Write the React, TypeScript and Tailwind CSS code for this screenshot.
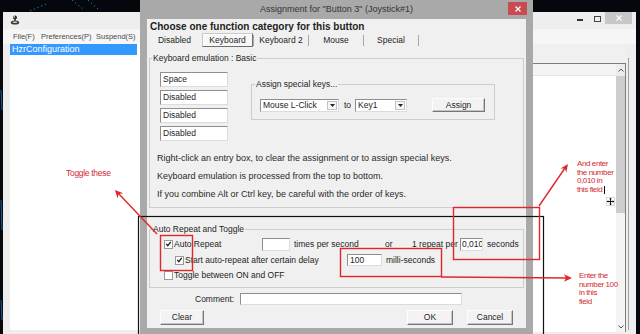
import React from "react";

const sunken =
  "bg-white border border-t-[#8e8e8e] border-l-[#8e8e8e] border-r-[#dcdcdc] border-b-[#dcdcdc]";
const raised =
  "bg-[#f3f3f3] border border-t-[#fdfdfd] border-l-[#fdfdfd] border-r-[#767676] border-b-[#767676] shadow-[inset_-1px_-1px_0_#c4c4c4]";

function Check({ on }: { on?: boolean }) {
  return (
    <span className="flex h-[9px] w-[9px] shrink-0 items-center justify-center border border-[#9a9a9a] bg-white">
      {on && (
        <svg viewBox="0 0 9 9" className="h-[8px] w-[8px]">
          <path d="M1.6 4.4 L3.6 6.6 L7.4 1.8" fill="none" stroke="#1a1a1a" strokeWidth="1.7" />
        </svg>
      )}
    </span>
  );
}

function Select({ value, className }: { value: string; className: string }) {
  return (
    <div className={`flex items-center ${sunken} ${className}`}>
      <span className="flex-1 pl-[2px] leading-none">{value}</span>
      <span className="mr-[1px] flex h-[9px] w-[10px] items-center justify-center border border-[#c2c2c2] bg-[#f6f6f6]">
        <svg viewBox="0 0 5 3" className="h-[3px] w-[5px]">
          <path d="M0 0H5L2.5 3Z" fill="#222" />
        </svg>
      </span>
    </div>
  );
}

function Wallpaper() {
  return (
    <svg className="absolute inset-0" width="640" height="334">
      <g stroke="#2f86d8" strokeWidth="1" strokeDasharray="1.5 2.5" opacity="0.85">
        <line x1="72" y1="0" x2="84" y2="10" />
        <line x1="88" y1="0" x2="98" y2="9" />
        <line x1="30" y1="11" x2="46" y2="4" />
      </g>
      <g stroke="#2f86d8" strokeWidth="1" opacity="0.7">
        <line x1="1" y1="90" x2="2" y2="110" />
        <line x1="1" y1="200" x2="2" y2="230" />
        <line x1="1" y1="300" x2="2" y2="320" />
      </g>
    </svg>
  );
}

function AppIcon() {
  return (
    <svg viewBox="0 0 10 10" className="h-[10px] w-[10px]">
      <ellipse cx="5" cy="7.5" rx="4.2" ry="2" fill="#3a3a3a" />
      <rect x="4.2" y="2.5" width="1.6" height="5" fill="#444" />
      <circle cx="5" cy="2.6" r="2" fill="#2b2b2b" />
      <circle cx="4.3" cy="2" r="0.7" fill="#fff" />
      <ellipse cx="5" cy="7.2" rx="2.5" ry="0.8" fill="#d8d8d8" />
    </svg>
  );
}

function MainWindow() {
  return (
    <div className="absolute left-[3px] top-[12px] flex h-[322px] w-[633px] flex-col bg-[#eeeeee]">
      <div className="flex h-[17px] items-start">
        <div className="ml-[7px] mt-[3px]">
          <AppIcon />
        </div>
        <div className="flex-1" />
        <div className="mt-[7px] h-[2px] w-[6px] bg-[#333]" />
        <div className="ml-[11px] mt-[4px] h-[6px] w-[7px] border border-[#444]" />
        <div className="ml-[4px] flex h-[12px] w-[27px] items-center justify-center bg-[#c7c7c7]">
          <svg viewBox="0 0 6 6" className="h-[6px] w-[6px]">
            <path d="M0.5 0.5L5.5 5.5M5.5 0.5L0.5 5.5" stroke="#fff" strokeWidth="1.1" />
          </svg>
        </div>
        <div className="w-[4px]" />
      </div>
      <div className="flex h-[15px] items-center bg-[#f6f6f6] text-[7.5px] text-[#4a4a4a]">
        <span className="ml-[10px] w-[28px]">File(F)</span>
        <span className="w-[55px]">Preferences(P)</span>
        <span>Suspend(S)</span>
      </div>
      <div className="flex flex-1 pb-[4px] pl-[7px]">
        <div className="w-[128px] bg-white">
          <div className="flex h-[11px] w-[127px] items-center bg-[#3399ff] pl-[2px] text-[9px] text-white">
            HzrConfiguration
          </div>
        </div>
        <div className="w-[395px] bg-white" />
        <div className="flex w-[93px] flex-col">
          <div className="h-[19px] bg-[#f0f0f0]" />
          <div className="mb-[-2px] flex flex-1 border-r border-t border-[#7d7d7d] bg-white">
            <div className="flex flex-1 flex-col">
              <div className="h-[12px] border-b border-[#e4e4e4] bg-[#f4f4f4]" />
            </div>
            <div className="flex w-[9px] flex-col bg-[#ececec]">
              <div className="flex h-[12px] items-center justify-center">
                <svg viewBox="0 0 6 4" className="h-[4px] w-[6px]">
                  <path d="M0.5 3.5L3 1L5.5 3.5" fill="none" stroke="#555" strokeWidth="1" />
                </svg>
              </div>
              <div className="h-[137px] bg-[#cdcdcd]" />
              <div className="flex-1 bg-[#f4f4f4]" />
              <div className="flex h-[11px] items-center justify-center bg-[#f4f4f4]">
                <svg viewBox="0 0 6 4" className="h-[4px] w-[6px]">
                  <path d="M0.5 0.5L3 3L5.5 0.5" fill="none" stroke="#555" strokeWidth="1" />
                </svg>
              </div>
            </div>
          </div>
        </div>
        <div className="w-[2px]" />
        <div className="mt-[14px] w-[1px] bg-[#a2a2a2]" />
      </div>
    </div>
  );
}

function Tabs() {
  const sep = <div className="h-[11px] w-[1px] self-center bg-[#a8a8a8]" />;
  return (
    <div className="mt-[1px] flex h-[14px] items-stretch text-[8.5px]">
      <div className="flex w-[55px] items-center justify-center">Disabled</div>
      <div className="flex w-[51px] items-center justify-center border border-l-[#c8c8c8] border-t-[#c8c8c8] border-r-[#6f6f6f] border-b-[#6f6f6f] bg-[#f7f7f7] shadow-[inset_1px_1px_0_#fff]">
        Keyboard
      </div>
      {sep}
      <div className="flex w-[54px] items-center justify-center">Keyboard 2</div>
      {sep}
      <div className="flex w-[54px] items-center justify-center">Mouse</div>
      {sep}
      <div className="flex w-[54px] items-center justify-center">Special</div>
      {sep}
    </div>
  );
}

function Dialog() {
  return (
    <div className="absolute left-[140px] top-0 flex h-[340px] w-[393px] flex-col bg-[#a9a9a9] px-[7px]">
      <div className="relative flex h-[19px] items-center justify-center text-[9px] text-[#353535]">
        Assignment for "Button 3" (Joystick#1)
        <div className="absolute right-[-1px] top-[2px] flex h-[13px] w-[19px] items-center justify-center bg-[#c94a50]">
          <svg viewBox="0 0 6 6" className="h-[6px] w-[6px]">
            <path d="M0.5 0.5L5.5 5.5M5.5 0.5L0.5 5.5" stroke="#fff" strokeWidth="1.2" />
          </svg>
        </div>
      </div>
      <div className="flex h-[309px] flex-col bg-[#f0f0f0] text-[8.5px] text-[#1e1e1e]">
        <div className="ml-[3px] mt-[2px] h-[11px] text-[10px] font-bold leading-[11px]">
          Choose one function category for this button
        </div>
        <Tabs />
        <fieldset className="mx-[2px] mt-[6px] border border-[#cdcdcd] pb-[4px] pt-[9px]">
          <legend className="ml-[2px] h-[10px] px-[1px] leading-[10px]">Keyboard emulation : Basic</legend>
          <div className="flex items-start">
            <div className="ml-[10px] flex w-[68px] flex-col gap-[3px]">
              {["Space", "Disabled", "Disabled", "Disabled"].map((v, i) => (
                <div key={i} className={`flex h-[15px] items-center pl-[2px] ${sunken}`}>
                  {v}
                </div>
              ))}
            </div>
            <fieldset className="ml-[23px] mt-[7px] w-[244px] border border-[#cdcdcd] pb-[7px] pt-[9px]">
              <legend className="ml-[3px] h-[10px] px-[1px] leading-[10px]">Assign special keys...</legend>
              <div className="flex items-center">
                <Select value="Mouse L-Click" className="ml-[8px] h-[13px] w-[79px]" />
                <span className="ml-[5px]">to</span>
                <Select value="Key1" className="ml-[4px] h-[13px] w-[52px]" />
                <div className={`ml-[25px] flex h-[14px] w-[53px] items-center justify-center ${raised}`}>
                  Assign
                </div>
              </div>
            </fieldset>
          </div>
          <div className="ml-[7px] mt-[8px] text-[9px] leading-[18px] text-[#2a2a2a]">
            <div>Right-click an entry box, to clear the assignment or to assign special keys.</div>
            <div>Keyboard emulation is processed from the top to bottom.</div>
            <div>If you combine Alt or Ctrl key, be careful with the order of keys.</div>
          </div>
        </fieldset>
        <fieldset className="mx-[2px] mt-[16px] border border-[#cdcdcd] pb-[5px] pt-[3px]">
          <legend className="ml-[2px] h-[10px] px-[1px] leading-[10px]">Auto Repeat and Toggle</legend>
          <div className="flex h-[14px] items-center">
            <div className="ml-[14px]">
              <Check on />
            </div>
            <span className="ml-[1px] w-[88px]">Auto Repeat</span>
            <div className={`h-[13px] w-[28px] ${sunken}`} />
            <span className="ml-[4px] w-[91px]">times per second</span>
            <span className="w-[27px]">or</span>
            <span className="w-[48px]">1 repeat per</span>
            <div className={`flex h-[13px] w-[23px] items-center overflow-hidden whitespace-nowrap pl-[1px] ${sunken}`}>
              0,010
            </div>
            <span className="ml-[4px]">seconds</span>
          </div>
          <div className="mt-[2px] flex h-[14px] items-center">
            <div className="ml-[25px]">
              <Check on />
            </div>
            <span className="ml-[1px] w-[162px]">Start auto-repeat after certain delay</span>
            <div className={`flex h-[12px] w-[35px] items-center pl-[2px] ${sunken}`}>100</div>
            <span className="ml-[4px]">milli-seconds</span>
          </div>
          <div className="mt-[1px] flex h-[14px] items-center">
            <div className="ml-[14px]">
              <Check />
            </div>
            <span className="ml-[1px]">Toggle between ON and OFF</span>
          </div>
        </fieldset>
        <div className="mt-[5px] flex h-[12px] items-center">
          <span className="ml-[48px] w-[45px]">Comment:</span>
          <div className={`h-[12px] w-[222px] ${sunken}`} />
        </div>
        <div className="mt-[5px] flex h-[15px]">
          <div className={`ml-[13px] flex w-[44px] items-center justify-center ${raised}`}>Clear</div>
          <div className={`ml-[203px] flex w-[46px] items-center justify-center ${raised}`}>OK</div>
          <div className={`ml-[14px] flex w-[46px] items-center justify-center ${raised}`}>Cancel</div>
        </div>
      </div>
    </div>
  );
}

function Annotations() {
  const red = "#e1262c";
  return (
    <>
      <svg className="pointer-events-none absolute inset-0" width="640" height="334">
        <rect x="138.5" y="216.5" width="405" height="130" fill="none" stroke="#111" strokeWidth="1.2" />
        <g stroke={red} strokeWidth="1.4" fill="none">
          <rect x="160.5" y="235.5" width="32" height="35" />
          <rect x="340.5" y="248.5" width="101" height="28" />
          <rect x="453.5" y="207.5" width="86" height="52" />
          <line x1="157" y1="234" x2="118" y2="193" />
          <line x1="441" y1="277" x2="566" y2="278" />
          <line x1="539" y1="206" x2="565" y2="168" />
        </g>
        <g fill={red}>
          <polygon points="115,190 123.3,193.2 118.7,194 117.5,198.6" />
          <polygon points="572,278 564,274.2 566,278 564,281.8" />
          <polygon points="568,164 566.3,172.6 564.9,168.5 560.5,168.6" />
        </g>
        <line x1="604.5" y1="186" x2="604.5" y2="194" stroke="#111" strokeWidth="1" />
        <g transform="translate(606,197)">
          <rect x="0.5" y="0.5" width="8" height="8" fill="#fff" stroke="#bbb" strokeWidth="0.6" />
          <path d="M4.5 1V8M1 4.5H8" stroke="#111" strokeWidth="1" />
          <path d="M4.5 0.8L3.2 2.3H5.8ZM4.5 8.2L3.2 6.7H5.8ZM0.8 4.5L2.3 3.2V5.8ZM8.2 4.5L6.7 3.2V5.8Z" fill="#111" />
        </g>
      </svg>
      <div className="pointer-events-none absolute left-[66px] top-[169px] text-[8.5px] leading-[9px] tracking-[-0.3px] text-[#d3292f]">
        Toggle these
      </div>
      <div className="pointer-events-none absolute left-[577px] top-[160px] text-[8px] leading-[8.5px] tracking-[-0.4px] text-[#d3292f]">
        <div>And enter</div>
        <div>the number</div>
        <div>0,010 in</div>
        <div>this field</div>
      </div>
      <div className="pointer-events-none absolute left-[579px] top-[272px] text-[8px] leading-[8.5px] tracking-[-0.4px] text-[#d3292f]">
        <div>Enter the</div>
        <div>number 100</div>
        <div>in this</div>
        <div>field</div>
      </div>
    </>
  );
}

export default function App() {
  return (
    <div className="relative h-[334px] w-[640px] overflow-hidden bg-[#04070b] font-['Liberation_Sans',Arial,sans-serif]">
      <Wallpaper />
      <MainWindow />
      <Dialog />
      <Annotations />
    </div>
  );
}
